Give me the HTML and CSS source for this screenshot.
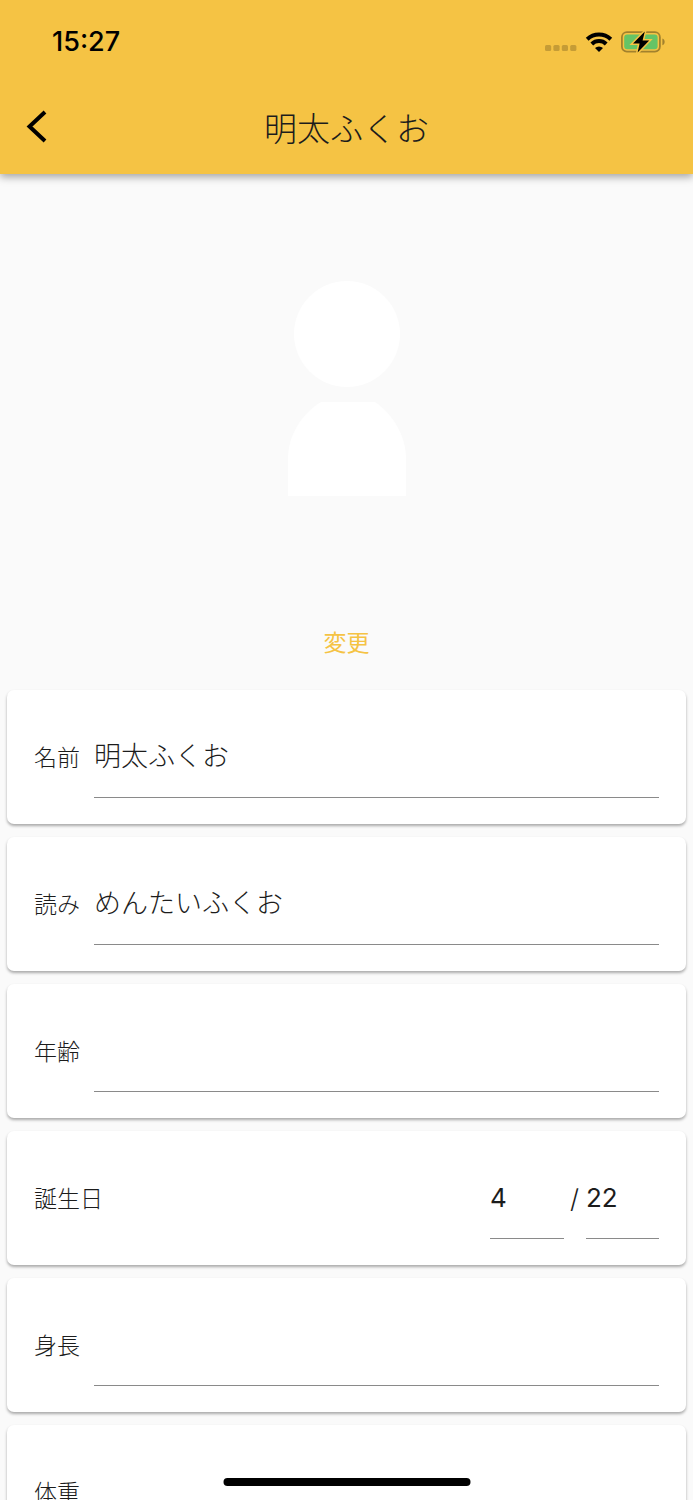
FILE: index.html
```html
<!DOCTYPE html>
<html lang="ja">
<head>
<meta charset="utf-8">
<meta name="viewport" content="width=device-width, initial-scale=1">
<title>明太ふくお</title>
<link rel="stylesheet" href="styles.css">
</head>
<body>
<div class="screen">
  <header class="app-bar">
    <div class="status">
      <span class="time">15:27</span>
      <div class="indicators">
        <svg class="signal" viewBox="0 0 32 6" width="32" height="6" aria-hidden="true">
          <rect x="0" width="6.2" height="6" rx="1.5"/><rect x="8.4" width="6.2" height="6" rx="1.5"/><rect x="16.8" width="6.2" height="6" rx="1.5"/><rect x="25.2" width="6.2" height="6" rx="1.5"/>
        </svg>
        <svg class="wifi" viewBox="0 0 28 20" width="28" height="20" aria-hidden="true">
          <path class="arc" d="M2.2 7.2a17 17 0 0 1 23.6 0M6.8 12a10.4 10.4 0 0 1 14.4 0"/>
          <path d="M14 20l-4-4a5.8 5.8 0 0 1 8 0z"/>
        </svg>
        <svg class="battery" viewBox="0 0 44 22" width="44" height="22" aria-hidden="true">
          <rect class="shell" x="0.9" y="1.2" width="38" height="19.4" rx="5"/>
          <path class="cap" d="M41.4 7.6c3 1 3 5.6 0 6.6z"/>
          <rect class="charge" x="3.2" y="3.6" width="33.4" height="14.6" rx="3"/>
          <path class="bolt" d="M23.800 0.500L12 12.400h6.600L16.600 21.500 28.200 9.600h-6.600z"/>
        </svg>
      </div>
    </div>
    <div class="toolbar">
      <button class="back" type="button" aria-label="戻る">
        <svg viewBox="0 0 22 34" width="22" height="34" aria-hidden="true"><path d="M20 2L4.500 16.500L20 31"/></svg>
      </button>
      <h1 class="title">明太ふくお</h1>
    </div>
  </header>
  <main class="content">
    <section class="photo">
      <svg class="avatar" viewBox="0 0 120 216" width="120" height="216" role="img" aria-label="プロフィール画像">
        <circle cx="60" cy="53" r="53"/>
        <path d="M34 121h54c18 12 31 34 31 57v37H1v-37c0-23 13-45 33-57z"/>
      </svg>
      <button class="change" type="button">変更</button>
    </section>
    <form class="fields">
      <div class="card"><label class="label" for="name">名前</label><input class="input" id="name" type="text" value="明太ふくお"></div>
      <div class="card"><label class="label" for="reading">読み</label><input class="input" id="reading" type="text" value="めんたいふくお"></div>
      <div class="card"><label class="label" for="age">年齢</label><input class="input" id="age" type="text"></div>
      <div class="card">
        <label class="label" for="month">誕生日</label>
        <div class="date">
          <input class="input" id="month" type="text" value="4">
          <span class="slash">/</span>
          <input class="input" type="text" value="22" aria-label="日">
        </div>
      </div>
      <div class="card"><label class="label" for="height">身長</label><input class="input" id="height" type="text"></div>
      <div class="card"><label class="label" for="weight">体重</label><input class="input" id="weight" type="text"></div>
    </form>
  </main>
  <div class="home-indicator"></div>
</div>
</body>
</html>
```
FILE: styles.css
```css
* { box-sizing: border-box; }

body {
  margin: 0;
  background: #fafafa;
  color: #1c1c1c;
  font-family: "Noto Sans CJK JP", sans-serif;
  font-weight: 300;
}

button, input { font: inherit; color: inherit; }
button { border: 0; background: none; padding: 0; cursor: pointer; }

.screen {
  position: relative;
  display: flex;
  flex-direction: column;
  height: 100vh;
  overflow: hidden;
}

.app-bar {
  position: relative;
  z-index: 1;
  flex: none;
  background: #f5c344;
  box-shadow: 0 3px 8px rgba(0, 0, 0, .35);
}

.status {
  display: flex;
  align-items: center;
  justify-content: space-between;
  height: 84px;
  padding: 0 28px 0 52px;
}

.time {
  color: #000;
  font: 500 27px/32px Inter, sans-serif;
}

.indicators { display: flex; align-items: center; gap: 8px; }
.signal { margin-top: 12px; fill: #c59c36; }
.arc { fill: none; stroke: #000; stroke-width: 4; }
.shell { fill: none; stroke: #a2812d; stroke-width: 1.8; }
.cap { fill: #a2812d; }
.charge { fill: #65c466; }
.bolt { fill: #000; stroke: #f5c344; stroke-width: 3; paint-order: stroke; }

.toolbar {
  display: grid;
  grid-template-columns: 64px 1fr 64px;
  align-items: center;
  height: 90px;
  padding-bottom: 4px;
}

.back { display: flex; padding-left: 25px; }
.back path { fill: none; stroke: #000; stroke-width: 4; }

.title {
  margin: 0;
  font-size: 33px;
  line-height: 48px;
  font-weight: 300;
  text-align: center;
}

.content {
  flex: 1;
  min-height: 0;
  overflow-y: auto;
  scrollbar-width: none;
}

.photo {
  display: flex;
  flex-direction: column;
  align-items: center;
  gap: 122px;
  padding: 107px 0 27px;
}

.avatar { fill: #fff; }

.change {
  padding: 4px 16px;
  color: #f5c344;
  font-size: 23px;
  line-height: 36px;
  font-weight: 400;
}

.fields {
  display: flex;
  flex-direction: column;
  gap: 13px;
  padding: 0 7px 13px;
}

.card {
  display: flex;
  align-items: center;
  justify-content: space-between;
  gap: 14px;
  height: 134px;
  padding: 0 27px;
  border-radius: 7px;
  background: #fff;
  box-shadow: 0 2px 3px rgba(0, 0, 0, .32);
}

.label { flex: none; padding-bottom: 2px; font-size: 23px; line-height: 36px; }

.input {
  flex: 1;
  width: 100%;
  min-width: 0;
  height: 82px;
  padding: 0 0 4px;
  border: 0;
  border-bottom: 1px solid #8a8a8a;
  border-radius: 0;
  outline: 0;
  background: none;
  font-size: 27px;
}

.date {
  display: grid;
  grid-template-columns: 74px 22px 73px;
  align-items: center;
  font-family: Inter, sans-serif;
  font-size: 26px;
  font-weight: 400;
}

.date .input { padding: 0; font-size: 26px; }
.slash { padding-left: 6px; font-weight: 300; }

.home-indicator {
  position: absolute;
  z-index: 2;
  bottom: 14px;
  left: 50%;
  width: 247px;
  height: 8px;
  border-radius: 4px;
  background: #000;
  transform: translateX(-50%);
}
```
